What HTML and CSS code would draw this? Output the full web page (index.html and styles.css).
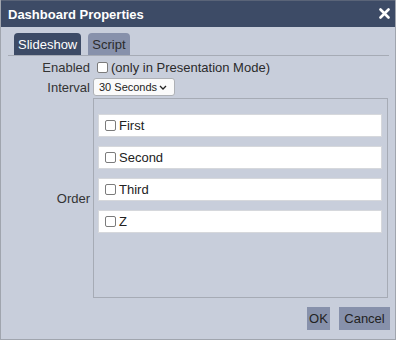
FILE: index.html
```html
<!DOCTYPE html>
<html>
<head>
<meta charset="utf-8">
<link rel="stylesheet" href="styles.css">
</head>
<body>
<div class="dialog">
  <div class="titlebar">
    <span class="title">Dashboard Properties</span>
    <span class="close"><svg width="11" height="11" viewBox="0 0 11 11"><path d="M1.5 1.5 L9.5 9.5 M9.5 1.5 L1.5 9.5" stroke="#fff" stroke-width="2.6" stroke-linecap="round"/></svg></span>
  </div>
  <div class="tabs">
    <div class="tab active">Slideshow</div>
    <div class="tab">Script</div>
  </div>
  <div class="form">
    <div class="label row1">Enabled</div>
    <div class="field row1"><input type="checkbox" class="cb cb-first"><span class="note">(only in Presentation Mode)</span></div>
    <div class="label row2">Interval</div>
    <div class="field row2">
      <span class="select">30 Seconds<svg class="chev" width="8" height="5" viewBox="0 0 8 5"><path d="M1 1 L4 4 L7 1" fill="none" stroke="#222" stroke-width="1.3"/></svg></span>
    </div>
    <div class="label order-label">Order</div>
    <div class="order">
      <div class="item"><input type="checkbox" class="cb"><span>First</span></div>
      <div class="item"><input type="checkbox" class="cb"><span>Second</span></div>
      <div class="item"><input type="checkbox" class="cb"><span>Third</span></div>
      <div class="item"><input type="checkbox" class="cb"><span>Z</span></div>
    </div>
  </div>
  <div class="buttons">
    <button class="btn btn-ok">OK</button>
    <button class="btn btn-cancel">Cancel</button>
  </div>
</div>
</body>
</html>
```
FILE: styles.css
```css
html, body {
  margin: 0;
  padding: 0;
  background: #c8cedb;
}
body {
  font-family: "Liberation Sans", Arial, sans-serif;
  font-size: 13px;
  color: #2b2b2b;
}
.dialog {
  width: 396px;
  height: 340px;
  box-sizing: border-box;
  border: 1px solid #a0a5ae;
  border-top: none;
  background: #c8cedb;
  display: flex;
  flex-direction: column;
}
.titlebar {
  height: 27px;
  background: #3d4b66;
  display: flex;
  align-items: center;
  justify-content: space-between;
  padding: 0 5px 0 7px;
  border-top: 1px solid #5a6478;
  box-sizing: border-box;
}
.title {
  color: #fff;
  font-weight: bold;
  font-size: 13px;
}
.close {
  display: flex;
  margin-top: -1px;
}
.tabs {
  margin: 6px 6px 0 7px;
  padding-left: 6px;
  display: flex;
  gap: 7px;
  border-bottom: 1px solid #a6abb5;
}
.tab {
  height: 22px;
  line-height: 23px;
  padding: 0 4px;
  border-radius: 4px 4px 0 0;
  background: #8791ab;
  color: #2b2b2b;
}
.tab.active {
  background: #3d4b66;
  color: #fff;
}
.form {
  display: grid;
  grid-template-columns: 82px 1fr;
  column-gap: 3px;
  margin: 0 7px 0 7px;
}
.label {
  text-align: right;
  color: #333;
  display: flex;
  align-items: center;
  justify-content: flex-end;
}
.row1 {
  height: 22px;
}
.row2 {
  height: 18px;
  margin-bottom: 2px;
}
.field {
  display: flex;
  align-items: center;
}
.cb {
  appearance: none;
  -webkit-appearance: none;
  width: 11px;
  height: 11px;
  margin: 0;
  border: 1px solid #7b7b7b;
  border-radius: 2px;
  background: #fff;
  box-sizing: border-box;
  flex: none;
}
.cb-first {
  margin-left: 4px;
  margin-top: 1px;
}
.note {
  margin-left: 3px;
  color: #2b2b2b;
}
.select {
  position: relative;
  box-sizing: border-box;
  width: 82px;
  height: 18px;
  line-height: 16px;
  padding-left: 5px;
  font-size: 11px;
  background: #fafafa;
  border: 1px solid #aeb1b6;
  border-radius: 3px;
  color: #222;
}
.chev {
  position: absolute;
  right: 7px;
  top: 6px;
}
.order {
  height: 200px;
  box-sizing: border-box;
  border: 1px solid #a6abb5;
  padding: 15px 5px 0 4px;
  display: flex;
  flex-direction: column;
  gap: 9px;
}
.item {
  height: 23px;
  box-sizing: border-box;
  background: #fff;
  border: 1px solid #d6d8dc;
  display: flex;
  align-items: center;
  padding-left: 6px;
  gap: 3px;
  color: #222;
}
.buttons {
  display: flex;
  justify-content: flex-end;
  gap: 9px;
  margin-top: 9px;
  padding-right: 5px;
}
.btn {
  font-family: "Liberation Sans", Arial, sans-serif;
  font-size: 13px;
  height: 23px;
  padding: 0;
  border: none;
  background: #8791ab;
  color: #222;
  margin: 0;
  line-height: 23px;
  text-align: center;
}
.btn-ok {
  width: 23px;
}
.btn-cancel {
  width: 51px;
}
```
